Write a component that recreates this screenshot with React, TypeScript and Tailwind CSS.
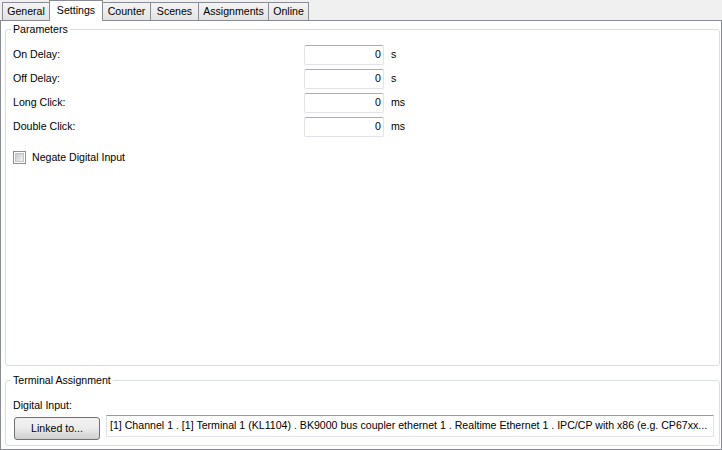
import React from "react";

const tabs = [
    { label: "General", w: "w-[48px]" },
    { label: "Settings", w: "w-[54px]", active: true },
    { label: "Counter", w: "w-[49px]" },
    { label: "Scenes", w: "w-[49px]" },
    { label: "Assignments", w: "w-[71px]" },
    { label: "Online", w: "w-[41px]" },
];

const params = [
    { label: "On Delay:", value: "0", unit: "s" },
    { label: "Off Delay:", value: "0", unit: "s" },
    { label: "Long Click:", value: "0", unit: "ms" },
    { label: "Double Click:", value: "0", unit: "ms" },
];

function Tab({ label, w, active, first }: { label: string; w: string; active?: boolean; first?: boolean }) {
    if (active) {
        return (
            <div
                className={`${w} ${first ? "" : "-ml-px"} relative z-10 h-[21px] -mb-px flex items-center justify-center border border-b-0 border-[#898c95] bg-white pb-px`}
            >
                {label}
            </div>
        );
    }
    return (
        <div
            className={`${w} ${first ? "" : "-ml-px"} h-[18px] flex items-center justify-center border border-b-0 border-[#898c95] bg-linear-to-b from-[#f4f4f4] to-[#e3e3e3] pt-px`}
        >
            {label}
        </div>
    );
}

function GroupBox({ title, className, children }: { title: string; className?: string; children: React.ReactNode }) {
    return (
        <fieldset className={`border border-[#d5dfe5] rounded-[3px] ${className ?? ""}`}>
            <legend className="-ml-[2px] px-[2px] leading-[13px]">{title}</legend>
            {children}
        </fieldset>
    );
}

export default function App() {
    return (
        <div className="w-[722px] h-[450px] flex flex-col bg-[#f0f0f0] text-black text-[10.6px] font-['Liberation_Sans',Arial,sans-serif] overflow-hidden">
            <div className="h-[20px] flex items-end pl-[2px]">
                {tabs.map((t, i) => (
                    <Tab key={t.label} label={t.label} w={t.w} active={t.active} first={i === 0} />
                ))}
            </div>

            <div className="flex-1 flex flex-col border border-[#898c95] bg-white pl-[4px] pr-[1px] pt-[2px] pb-[3px]">
                <GroupBox title="Parameters" className="flex-1 min-h-0 pl-[7px] pr-[5px]">
                    <div className="mt-[9px] flex flex-col gap-[4px]">
                        {params.map((p) => (
                            <div key={p.label} className="flex items-center h-[20px]">
                                <span className="w-[291px]">{p.label}</span>
                                <div className="w-[80px] h-[20px] flex items-center justify-end pr-[2px] border border-[#e2e3ea] border-t-[#abadb3] rounded-[2px]">
                                    {p.value}
                                </div>
                                <span className="ml-[7px]">{p.unit}</span>
                            </div>
                        ))}
                    </div>
                    <div className="mt-[14px] flex items-center h-[13px]">
                        <div className="w-[13px] h-[13px] border border-[#8e8f8f] bg-white p-px">
                            <div className="w-full h-full bg-linear-to-br from-[#c6cad0] to-[#f4f4f4] border border-[#c0c4ca]" />
                        </div>
                        <span className="ml-[6px]">Negate Digital Input</span>
                    </div>
                </GroupBox>

                <GroupBox title="Terminal Assignment" className="mt-[8px] h-[72px] pl-[7px] pr-[5px]">
                    <div className="mt-[12px] leading-[13px]">Digital Input:</div>
                    <div className="mt-[3px] flex items-start">
                        <button
                            type="button"
                            className="ml-px mt-[2px] w-[86px] h-[23px] shrink-0 border border-[#707070] rounded-[3px] bg-linear-to-b from-[#f2f2f2] via-[#ebebeb] to-[#cfcfcf]"
                        >
                            Linked to...
                        </button>
                        <div className="ml-[6px] flex-1 min-w-0 h-[22px] flex items-center pl-[3px] border border-[#e2e3ea] border-t-[#9a9a9a] whitespace-nowrap overflow-hidden">
                            [1] Channel 1 . [1] Terminal 1 (KL1104) . BK9000 bus coupler ethernet 1 . Realtime Ethernet 1 . IPC/CP with x86 (e.g. CP67xx...
                        </div>
                    </div>
                </GroupBox>
            </div>
        </div>
    );
}
